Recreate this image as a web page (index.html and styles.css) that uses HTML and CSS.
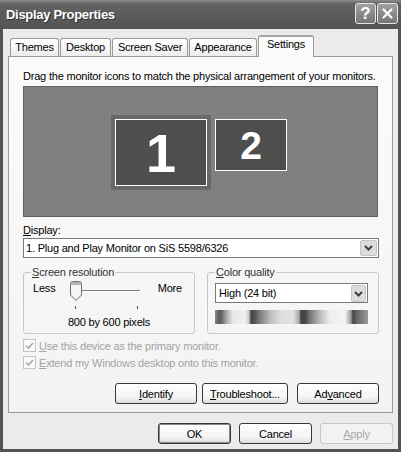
FILE: index.html
```html
<!DOCTYPE html>
<html>
<head>
<meta charset="utf-8">
<title>Display Properties</title>
<link rel="stylesheet" href="styles.css">
</head>
<body>
<div class="window">
  <div class="titlebar">
    <span class="title">Display Properties</span>
    <div class="tbtns">
      <span class="tbtn">?</span>
      <span class="tbtn"><svg width="13" height="13" viewBox="0 0 13 13"><path d="M2.5 2.5 L10.5 10.5 M10.5 2.5 L2.5 10.5" stroke="#fff" stroke-width="2.2" stroke-linecap="round"/></svg></span>
    </div>
  </div>
  <div class="frame">
    <div class="tabs">
      <div class="tab w-themes">Themes</div>
      <div class="tab w-desktop">Desktop</div>
      <div class="tab w-saver">Screen Saver</div>
      <div class="tab w-appear">Appearance</div>
      <div class="tab active w-settings">Settings</div>
    </div>
    <div class="panel">
      <p class="intro">Drag the monitor icons to match the physical arrangement of your monitors.</p>
      <div class="monitors">
        <div class="mon mon1"><div class="screen">1</div></div>
        <div class="mon mon2"><div class="screen">2</div></div>
      </div>
      <div class="lbl"><u>D</u>isplay:</div>
      <div class="combo">
        <span>1. Plug and Play Monitor on SiS 5598/6326</span>
        <svg class="arrow" width="17" height="16" viewBox="0 0 17 16"><rect x="0.5" y="0.5" width="16" height="15" rx="1.5" fill="#dcdcdc" stroke="#c4c4c4"/><path d="M5 6 L8.5 9.5 L12 6" fill="none" stroke="#3c3c3c" stroke-width="2"/></svg>
      </div>
      <div class="groups">
        <fieldset class="grp res">
          <legend><u>S</u>creen resolution</legend>
          <div class="slider-row">
            <span class="less">Less</span>
            <svg width="82" height="32" viewBox="0 0 82 32">
              <line x1="9" y1="11.5" x2="76" y2="11.5" stroke="#808080"/>
              <line x1="9" y1="12.5" x2="76" y2="12.5" stroke="#ffffff"/>
              <path d="M6.5 4.5 Q6.5 2.5 8.5 2.5 H15.5 Q17.5 2.5 17.5 4.5 V16 L12 21.5 L6.5 16 Z" fill="#f6f6f6" stroke="#6e6e6e"/>
              <rect x="7" y="3" width="10" height="3" fill="#b4b4b4"/>
              <line x1="11.5" y1="27" x2="11.5" y2="30" stroke="#555"/>
              <line x1="73.5" y1="27" x2="73.5" y2="30" stroke="#555"/>
            </svg>
            <span class="more">More</span>
          </div>
          <div class="res-text">800 by 600 pixels</div>
        </fieldset>
        <fieldset class="grp color">
          <legend><u>C</u>olor quality</legend>
          <div class="combo small">
            <span>High (24 bit)</span>
            <svg class="arrow" width="15" height="17" viewBox="0 0 15 17"><rect x="0.5" y="0.5" width="14" height="16" rx="1.5" fill="#dcdcdc" stroke="#c4c4c4"/><path d="M4 7 L7.5 10.5 L11 7" fill="none" stroke="#3c3c3c" stroke-width="2"/></svg>
          </div>
          <div class="colorbar"></div>
        </fieldset>
      </div>
      <div class="checks">
        <div class="check"><span class="box"><svg width="11" height="11" viewBox="0 0 11 11"><path d="M2 5.5 L4.5 8 L9 3" fill="none" stroke="#a8a8a8" stroke-width="1.6"/></svg></span><span><u>U</u>se this device as the primary monitor.</span></div>
        <div class="check"><span class="box"><svg width="11" height="11" viewBox="0 0 11 11"><path d="M2 5.5 L4.5 8 L9 3" fill="none" stroke="#a8a8a8" stroke-width="1.6"/></svg></span><span><u>E</u>xtend my Windows desktop onto this monitor.</span></div>
      </div>
      <div class="actions">
        <div class="btn b-identify"><span><u>I</u>dentify</span></div>
        <div class="btn b-trouble"><span><u>T</u>roubleshoot...</span></div>
        <div class="btn b-adv"><span>Ad<u>v</u>anced</span></div>
      </div>
    </div>
    <div class="footer">
      <div class="btn default">OK</div>
      <div class="btn">Cancel</div>
      <div class="btn disabled"><span><u>A</u>pply</span></div>
    </div>
  </div>
</div>
</body>
</html>
```

FILE: styles.css
```css
html, body {
  margin: 0;
  padding: 0;
}
body {
  width: 401px;
  height: 452px;
  overflow: hidden;
  font-family: "Liberation Sans", Arial, sans-serif;
  font-size: 11px;
  letter-spacing: -0.2px;
  color: #000;
  background: #ebebeb;
}
.window {
  width: 401px;
  height: 452px;
  display: flex;
  flex-direction: column;
}
.titlebar {
  height: 29px;
  flex: none;
  box-sizing: border-box;
  display: flex;
  align-items: center;
  justify-content: space-between;
  padding: 0 3px 0 6px;
  background: linear-gradient(#8c8c8c, #626262 4px, #5a5a5a 60%, #545454);
  color: #fff;
}
.title {
  font-weight: bold;
  font-size: 13px;
  letter-spacing: -0.3px;
  text-shadow: 1px 1px #333;
}
.tbtns {
  display: flex;
  gap: 1px;
  align-self: flex-start;
  margin-top: 3px;
}
.tbtn {
  width: 21px;
  height: 21px;
  box-sizing: border-box;
  border: 1px solid #e6e6e6;
  border-radius: 3px;
  background: linear-gradient(#a0a0a0, #767676);
  display: flex;
  align-items: center;
  justify-content: center;
  font-weight: bold;
  font-size: 17px;
  letter-spacing: 0;
  line-height: 1;
}
.frame {
  flex: 1;
  display: flex;
  flex-direction: column;
  background: #ebebeb;
  border: 3px solid #545454;
  border-top: 0;
  padding: 6px 5px 0;
}
.tabs {
  display: flex;
  align-items: flex-end;
  gap: 1px;
  height: 21px;
  padding-left: 2px;
  position: relative;
  z-index: 1;
}
.tab {
  box-sizing: border-box;
  height: 18px;
  border: 1px solid #9a9a9a;
  border-bottom: 0;
  border-radius: 3px 3px 0 0;
  background: linear-gradient(#ffffff, #ededed);
  text-align: center;
  line-height: 16px;
  white-space: nowrap;
}
.tab.active {
  height: 22px;
  margin-bottom: -1px;
  background: #fbfbfb;
  border-top: 2px solid #a4a4a4;
  line-height: 15px;
}
.w-themes { width: 49px; }
.w-desktop { width: 51px; }
.w-saver { width: 76px; }
.w-appear { width: 68px; }
.w-settings { width: 56px; }
.panel {
  flex: none;
  border: 1px solid #9a9a9a;
  background: linear-gradient(#fbfbfb, #f3f3f3);
  padding: 12px 13px 8px 14px;
}
.intro {
  margin: 0;
  height: 14px;
  line-height: 14px;
  white-space: nowrap;
}
.monitors {
  margin-top: 3px;
  margin-right: 1px;
  height: 131px;
  box-sizing: border-box;
  border: 1px solid #626262;
  background: #808080;
  position: relative;
}
.mon {
  position: absolute;
  box-sizing: border-box;
}
.mon1 {
  left: 87px;
  top: 28px;
  width: 100px;
  height: 75px;
  padding: 4px;
  background: #686868;
}
.mon2 {
  left: 191px;
  top: 32px;
  width: 72px;
  height: 52px;
}
.screen {
  height: 100%;
  box-sizing: border-box;
  border: 1px solid #ffffff;
  background: #4e4e4e;
  color: #fff;
  font-weight: bold;
  display: flex;
  align-items: center;
  justify-content: center;
  line-height: 1;
  letter-spacing: 0;
}
.mon1 .screen { font-size: 54px; }
.mon2 .screen { font-size: 39px; }
.lbl {
  margin-top: 6px;
  line-height: 14px;
}
.combo {
  margin-top: 1px;
  height: 20px;
  box-sizing: border-box;
  border: 1px solid #7a7a7a;
  background: #fff;
  display: flex;
  align-items: center;
  justify-content: space-between;
  padding-left: 2px;
  padding-right: 1px;
  white-space: nowrap;
}
.combo.small {
  margin-top: 4px;
  padding-left: 3px;
}
.groups {
  display: flex;
  gap: 12px;
  margin-top: 7px;
}
.grp {
  margin: 0;
  padding: 0 7px 4px;
  border: 1px solid #c8c8c8;
  border-radius: 3px;
  min-width: 0;
}
.grp legend {
  padding: 0 1px;
  line-height: 14px;
  color: #333;
}
.res {
  width: 172px;
  box-sizing: border-box;
  flex: none;
}
.color {
  flex: 1;
  padding-right: 10px;
}
.slider-row {
  display: grid;
  grid-template-columns: 31px 82px 1fr;
  height: 32px;
  padding: 0 5px 0 2px;
}
.less, .more {
  margin-top: 2px;
  line-height: 14px;
}
.more { text-align: right; }
.res-text {
  margin-top: 4px;
  line-height: 14px;
  text-align: center;
}
.colorbar {
  margin-top: 7px;
  height: 14px;
  background: linear-gradient(to right,
    #8a8a8a 0px, #5a5a5a 4px, #6a6a6a 7px, #b0b0b0 12px, #e8e8e8 18px,
    #f0f0f0 30px, #c8c8c8 34px, #444 36px, #555 40px, #777 44px,
    #bbb 55px, #ddd 65px, #e2e2e2 78px, #aaa 84px, #444 86px, #444 90px,
    #777 95px, #bbb 105px, #eee 115px, #f4f4f4 130px, #999 136px,
    #444 138px, #666 142px, #999 153px);
}
.checks {
  margin-top: 3px;
}
.check {
  display: flex;
  align-items: center;
  gap: 3px;
  height: 17px;
  color: #a3a3a3;
}
.box {
  width: 13px;
  height: 13px;
  box-sizing: border-box;
  border: 1px solid #c4c4c4;
  background: #fafafa;
  display: flex;
  align-items: center;
  justify-content: center;
}
.actions {
  display: flex;
  justify-content: flex-end;
  margin-top: 12px;
}
.btn {
  height: 21px;
  box-sizing: border-box;
  border: 1px solid #383838;
  border-radius: 3px;
  background: linear-gradient(#ffffff, #f4f4f4 70%, #dcdcdc);
  display: flex;
  align-items: center;
  justify-content: center;
  white-space: nowrap;
}
.b-identify { width: 82px; margin-right: 5px; }
.b-trouble { width: 86px; margin-right: 9px; }
.b-adv { width: 82px; }
.footer {
  display: flex;
  justify-content: flex-end;
  gap: 8px;
  margin-top: 10px;
}
.footer .btn { width: 73px; }
.btn.default {
  box-shadow: inset 0 0 0 1px #8a8a8a;
}
.btn.disabled {
  border-color: #c6c6c6;
  color: #a8a8a8;
  background: #f2f2f2;
}
```
